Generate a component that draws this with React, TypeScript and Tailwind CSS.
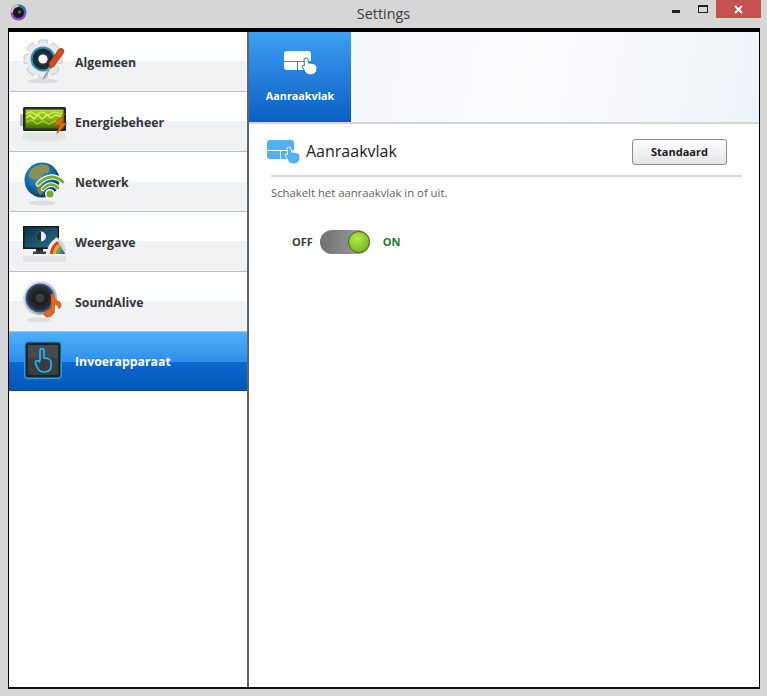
import type { ReactNode } from "react";

function GearIcon() {
  const teeth = [0, 45, 90, 135, 180, 225, 270, 315];
  return (
    <svg className="block" width="56" height="56" viewBox="0 0 56 56">
      <defs>
        <radialGradient id="lens" cx="50%" cy="50%" r="50%">
          <stop offset="0%" stopColor="#4a5560" />
          <stop offset="75%" stopColor="#1a2530" />
          <stop offset="100%" stopColor="#26343f" />
        </radialGradient>
      </defs>
      {teeth.map((a) => (
        <rect key={a} x="22.5" y="4" width="9" height="10" rx="1.5" fill="#e6e8ea" stroke="#b4b8bc" strokeWidth="0.7" transform={`rotate(${a} 27 23)`} />
      ))}
      <circle cx="27" cy="23" r="16" fill="#e9ebed" />
      <circle cx="27" cy="23" r="12.5" fill="#2f90b8" />
      <circle cx="27" cy="23" r="10.5" fill="url(#lens)" />
      <circle cx="27" cy="23" r="4.6" fill="#ffffff" />
      <path d="M26 44 L34 29 L36 30.5 L28 44 Z" fill="#9ea3a8" />
      <path d="M33 27 L43 13 Q45.5 11.5 47.5 13.5 Q48.5 15.5 47 17.5 L37.5 31 L33.5 31.5 Z" fill="#cf4a1c" stroke="#8f2d0d" strokeWidth="0.6" />
      <ellipse cx="27" cy="45" rx="15" ry="2.5" fill="#d0d3d6" opacity="0.7" />
    </svg>
  );
}

function BatteryIcon() {
  return (
    <svg className="block" width="47" height="38" viewBox="0 0 47 38">
      <defs>
        <linearGradient id="cell" x1="0" y1="0" x2="0" y2="1">
          <stop offset="0%" stopColor="#a9d62e" />
          <stop offset="55%" stopColor="#7cb016" />
          <stop offset="100%" stopColor="#3f6a08" />
        </linearGradient>
      </defs>
      <rect x="0" y="8" width="4" height="12" rx="1" fill="#b5b8ba" />
      <rect x="3" y="1" width="43" height="24" rx="1.5" fill="#24272b" />
      <rect x="5.5" y="3.5" width="38" height="19" fill="url(#cell)" />
      <path d="M6 8 L11 6 L16 9 L22 6 L28 9 L34 6 L42 8" fill="none" stroke="#c8ea4c" strokeWidth="1.6" />
      <path d="M6 12 L10 9 L14 13 L18 9 L22 13 L27 9 L31 12 L36 9 L42 11" fill="none" stroke="#dcf36a" strokeWidth="1.4" />
      <path d="M6 16 L12 14 L17 18 L23 15 L29 18 L35 15 L42 17" fill="none" stroke="#a6d628" strokeWidth="1.2" />
      <path d="M45 7 L33 19 L40 19 L36 29 L47 17 L41 17 Z" fill="#e8661d" stroke="#b23f0b" strokeWidth="0.5" />
      <rect x="3" y="27" width="42" height="7" fill="#dcdfd9" opacity="0.7" />
      <rect x="6" y="34" width="36" height="3" fill="#e7e9e6" opacity="0.7" />
    </svg>
  );
}

function GlobeIcon() {
  return (
    <svg className="block" width="44" height="46" viewBox="0 0 44 46">
      <defs>
        <radialGradient id="sea" cx="40%" cy="35%" r="65%">
          <stop offset="0%" stopColor="#36a4d8" />
          <stop offset="70%" stopColor="#0f5f9d" />
          <stop offset="100%" stopColor="#0b3a68" />
        </radialGradient>
      </defs>
      <circle cx="19" cy="19" r="17.5" fill="url(#sea)" />
      <path d="M9 8 Q16 2 24 4 Q29 8 25 12 Q19 11 18 17 Q12 20 6 16 Q6 11 9 8 Z" fill="#8d9150" />
      <path d="M14 24 Q20 22 22 27 Q21 33 17 34 Q13 31 14 24 Z" fill="#6f8150" />
      <path d="M15 23 Q28 10 40 21" fill="none" stroke="#ffffff" strokeWidth="5" strokeLinecap="round" />
      <path d="M15 23 Q28 10 40 21" fill="none" stroke="#7cab2c" strokeWidth="3" strokeLinecap="round" />
      <path d="M20 28 Q28 20 35 27" fill="none" stroke="#ffffff" strokeWidth="4.5" strokeLinecap="round" />
      <path d="M20 28 Q28 20 35 27" fill="none" stroke="#7cab2c" strokeWidth="2.6" strokeLinecap="round" />
      <circle cx="27" cy="33" r="5" fill="#ffffff" />
      <circle cx="27" cy="33" r="3.6" fill="#74a925" />
      <ellipse cx="19" cy="42" rx="13" ry="2.5" fill="#d4d6d8" opacity="0.8" />
    </svg>
  );
}

function DisplayIcon() {
  const bands: [number, string][] = [
    [18, "#eeeeee"],
    [15, "#d63f2f"],
    [12, "#e9a52b"],
    [9, "#6aa83a"],
    [6, "#3a78c0"],
    [3, "#55585c"],
  ];
  return (
    <svg className="block" width="44" height="38" viewBox="0 0 44 38">
      <defs>
        <linearGradient id="scr" x1="0" y1="0" x2="1" y2="1">
          <stop offset="0%" stopColor="#0e3448" />
          <stop offset="100%" stopColor="#2b6d88" />
        </linearGradient>
      </defs>
      <rect x="0" y="0" width="36" height="23" fill="#15181b" />
      <rect x="1.5" y="1.5" width="33" height="20" fill="url(#scr)" />
      <circle cx="18" cy="10.5" r="5" fill="#e6edf0" />
      <path d="M18 5.5 A5 5 0 0 0 18 15.5 Z" fill="#1c3442" />
      <rect x="13" y="23" width="7" height="3" fill="#26292c" />
      <rect x="10" y="25.5" width="13" height="2.5" fill="#3d4043" />
      <path d="M24 28 L42 28 L43 24 Q41 14 33 11 Z" fill="#d2d4d6" />
      {bands.map(([r, color]) => (
        <path key={r} d={`M42 28 L${42 - r} 28 A${r} ${r} 0 0 1 ${42 - r * 0.5} ${28 - r * 0.87} Z`} fill={color} />
      ))}
      <rect x="0" y="30" width="43" height="6" fill="#dcdee0" opacity="0.75" />
    </svg>
  );
}

function SpeakerIcon() {
  return (
    <svg className="block" width="44" height="46" viewBox="0 0 44 46">
      <defs>
        <radialGradient id="cone" cx="50%" cy="50%" r="50%">
          <stop offset="0%" stopColor="#55585c" />
          <stop offset="45%" stopColor="#1c1d20" />
          <stop offset="100%" stopColor="#2e3136" />
        </radialGradient>
        <linearGradient id="ring" x1="0" y1="0" x2="1" y2="1">
          <stop offset="0%" stopColor="#f5f5f5" />
          <stop offset="100%" stopColor="#8e9196" />
        </linearGradient>
      </defs>
      <circle cx="20" cy="19" r="17" fill="url(#ring)" />
      <circle cx="20" cy="19" r="14.5" fill="#2a4f93" />
      <circle cx="20" cy="19" r="12.5" fill="url(#cone)" />
      <circle cx="20" cy="19" r="4" fill="#3b3d41" />
      <path d="M31 15 L33.5 15 Q34 21 40 23 Q42.5 27 39 30 Q38 26 34.5 25 L34.5 33 Q32 39 26 38 Q22 35 26 31.5 Q29 30 31 31 Z" fill="#e8641f" stroke="#b8470f" strokeWidth="0.5" />
      <ellipse cx="19" cy="41" rx="12" ry="2.5" fill="#d8dadc" opacity="0.8" />
    </svg>
  );
}

function TouchIcon() {
  return (
    <svg className="block" width="38" height="38" viewBox="0 0 38 38">
      <rect x="0.75" y="0.75" width="36.5" height="36.5" rx="3.5" fill="#1f2225" stroke="#16a6ee" strokeWidth="1.5" />
      <rect x="4" y="4" width="30" height="30" rx="1.5" fill="#3a3c3f" />
      <rect x="4" y="4" width="30" height="13" fill="#47494c" />
      <path d="M16 20 V10 Q16 7.5 18 7.5 Q20 7.5 20 10 V17 Q27 17.5 27 21 V25 Q27 31 20.5 31 Q15 31 13 26 L11.5 22 Q11 20 13 19.5 Q15 19.5 16 21.5" fill="none" stroke="#19c0f5" strokeWidth="1.6" strokeLinejoin="round" />
    </svg>
  );
}

// same touchpad glyph for the tab and the heading, just a different fill
function PadIcon({ color, edge }: { color: string; edge: string }) {
  return (
    <svg className="block" width="33" height="24" viewBox="0 0 33 24">
      <path d="M3 0 H24 Q27 0 27 3 V10 H0 V3 Q0 0 3 0 Z" fill={color} />
      <path d="M0 11 H13 V19 H3 Q0 19 0 16 Z" fill={color} />
      <rect x="14" y="11" width="9" height="8" fill={color} />
      <path d="M20 9 Q20 7 22 7 Q24 7 24 9 L24.5 12 Q32 12 33 16 Q33.5 24 26 24 Q22 24 20.5 20 L18 15 Q18.5 13.5 20.5 14.5 Z" fill={color} stroke={edge} strokeWidth="0.9" />
    </svg>
  );
}

type NavItem = { label: string; icon: ReactNode; iconClass: string; active?: boolean };

const navItems: NavItem[] = [
  { label: "Algemeen", icon: <GearIcon />, iconClass: "pl-[7px] translate-y-[2px]" },
  { label: "Energiebeheer", icon: <BatteryIcon />, iconClass: "pl-[11px] translate-y-[3px]" },
  { label: "Netwerk", icon: <GlobeIcon />, iconClass: "pl-[14px] translate-y-[2px]" },
  { label: "Weergave", icon: <DisplayIcon />, iconClass: "pl-[14px] translate-y-[3px]" },
  { label: "SoundAlive", icon: <SpeakerIcon />, iconClass: "pl-[11px]" },
  { label: "Invoerapparaat", icon: <TouchIcon />, iconClass: "pl-[15px] translate-y-[-1px]", active: true },
];

function SidebarRow({ item }: { item: NavItem }) {
  return (
    <div
      className={
        item.active
          ? "flex h-[59px] items-center border-b border-[#0a4c9c] bg-[linear-gradient(#4fb0fb_0%,#2f8fe9_51%,#0a68cf_51%,#0556b8_100%)] text-white"
          : "flex h-[60px] items-center border-b border-[#bdbdbd] bg-[linear-gradient(#ffffff_50%,#f1f2f4_50%)] text-[#33353a]"
      }
    >
      <div className={`w-[66px] shrink-0 ${item.iconClass}`}>{item.icon}</div>
      <span className="mt-[3px] text-[12.3px] font-bold">{item.label}</span>
    </div>
  );
}

export default function App() {
  return (
    <div className="flex h-[696px] w-[767px] flex-col overflow-hidden bg-[#d6d6d6] font-['Open_Sans',sans-serif]">
      <header className="relative flex h-[28px] shrink-0 items-center justify-center">
        <svg className="absolute left-[10px] top-[4px]" width="17" height="17" viewBox="0 0 17 17">
          <circle cx="8.5" cy="8.5" r="8" fill="#8a4bc2" />
          <path d="M8.5 0.5 A8 8 0 0 1 16.5 8.5 L8.5 8.5 Z" fill="#2a72b8" />
          <path d="M0.5 8.5 A8 8 0 0 1 8.5 0.5 L8.5 8.5 Z" fill="#bfc2c6" />
          <circle cx="8.5" cy="8.5" r="5.5" fill="#17191c" />
          <circle cx="9.5" cy="8" r="1.4" fill="#6d7075" />
        </svg>
        <span className="text-[14.4px] text-[#3c3c3c]">Settings</span>
        <div className="absolute right-[6px] top-0 flex items-start">
          <div className="flex h-[18px] w-[34px] items-center justify-center">
            <span className="mt-[5px] h-[3px] w-[8px] bg-[#1f1f1f]" />
          </div>
          <div className="flex h-[18px] w-[20px] items-center justify-center">
            <span className="mt-[-1px] h-[8px] w-[10px] border border-t-2 border-[#1f1f1f]" />
          </div>
          <div className="ml-[3px] flex h-[18px] w-[45px] items-center justify-center bg-[#c75050]">
            <svg width="9" height="9" viewBox="0 0 9 9">
              <path d="M1 1 L8 8 M8 1 L1 8" stroke="#ffffff" strokeWidth="2" />
            </svg>
          </div>
        </div>
      </header>

      <div className="ml-[8px] mr-[7px] flex h-[661px] shrink-0 border-x border-b-2 border-t-4 border-black border-b-[#111111] bg-white">
        <aside className="flex w-[238px] shrink-0 flex-col">
          {navItems.map((item) => (
            <SidebarRow key={item.label} item={item} />
          ))}
        </aside>
        <div className="w-[2px] shrink-0 bg-[#5d6770]" />

        <main className="flex min-w-0 flex-1 flex-col">
          <div className="flex h-[92px] shrink-0 border-b-2 border-[#d4d4d4] bg-[linear-gradient(100deg,#f1f5fa,#fbfcfe_55%,#eef3f9)]">
            <div className="flex w-[102px] flex-col items-center bg-[linear-gradient(#3f9ff2,#0a5fc4)] pt-[19px] text-white">
              <PadIcon color="#ffffff" edge="#1269c8" />
              <span className="mt-[13px] text-[10.8px] font-bold">Aanraakvlak</span>
            </div>
          </div>

          <div className="flex items-center justify-between pl-[18px] pr-[32px] pt-[15px]">
            <div className="flex items-center gap-[6px]">
              <PadIcon color="#52b0f5" edge="#ffffff" />
              <span className="mt-[-2px] text-[16px] text-[#1b1b1b]">Aanraakvlak</span>
            </div>
            <button className="flex h-[26px] w-[95px] items-center justify-center rounded-[3px] border border-[#8a8a8a] bg-[linear-gradient(#ffffff,#e4e4e4)] text-[11px] font-bold text-[#1a1a1a]">
              Standaard
            </button>
          </div>

          <div className="ml-[22px] mr-[17px] mt-[10px] h-[2px] bg-[#d8d8d8]" />

          <p className="ml-[22px] mt-[8px] text-[11.3px] text-[#5f5f5f]">Schakelt het aanraakvlak in of uit.</p>

          <div className="ml-[43px] mt-[28px] flex items-center">
            <span className="text-[11px] font-bold text-[#3a3a3a]">OFF</span>
            <div className="ml-[7px] flex h-[24px] w-[50px] items-center justify-end rounded-full bg-[linear-gradient(90deg,#6f6f6f,#a4a4a4)]">
              <span className="h-[22px] w-[22px] rounded-full border border-[#4a6a18] bg-[radial-gradient(circle_at_40%_35%,#b6ea4a,#62aa12)]" />
            </div>
            <span className="ml-[13px] text-[11px] font-bold text-[#1f7a1f]">ON</span>
          </div>
        </main>
      </div>
    </div>
  );
}
